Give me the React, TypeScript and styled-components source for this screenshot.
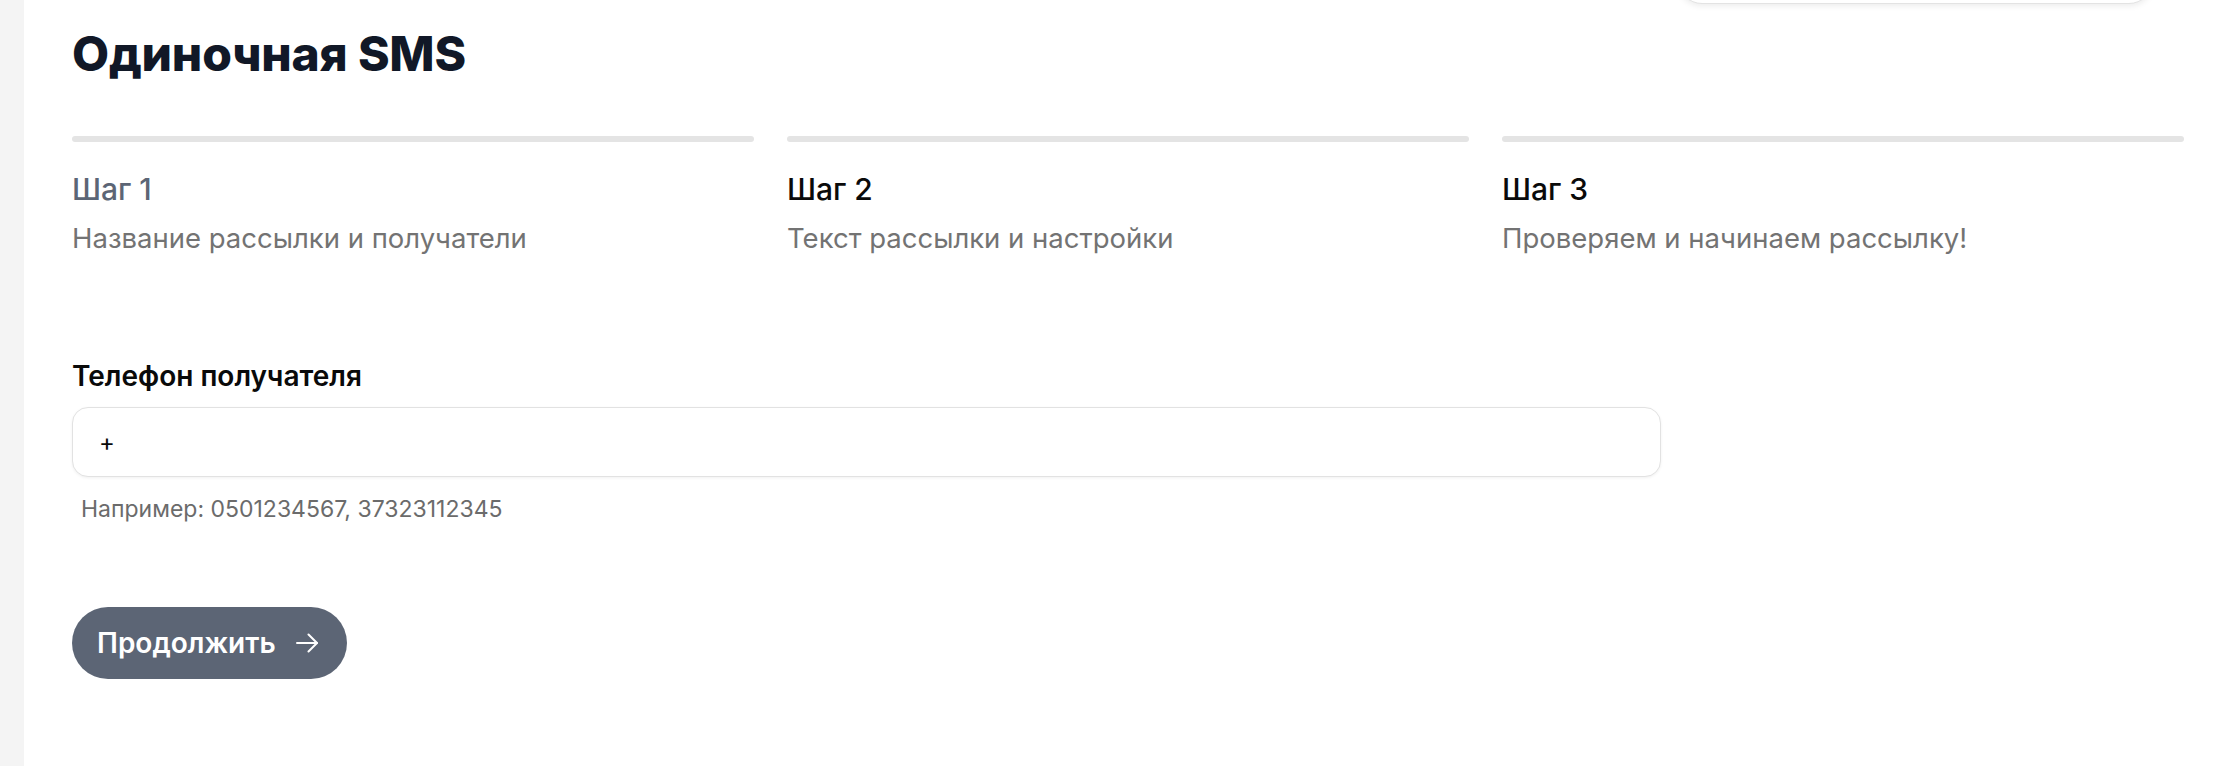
import React from "react";
import styled, { createGlobalStyle } from "styled-components";

const Global = createGlobalStyle`
  html, body { margin: 0; padding: 0; background: #ffffff; }
  body { font-family: Inter, "Noto Sans", sans-serif; -webkit-font-smoothing: antialiased; }
  * { box-sizing: border-box; }
`;

const Layout = styled.div`
  display: flex;
  min-height: 766px;
  width: 2232px;
  overflow: hidden;
`;

const Sidebar = styled.aside`
  flex: 0 0 24px;
  background: #f4f4f4;
`;

const Main = styled.main`
  position: relative;
  flex: 1;
  padding: 24px 48px 40px 48px;
`;

const FloatingBar = styled.div`
  position: absolute;
  top: -60px;
  left: 1654px;
  width: 475px;
  height: 64px;
  border: 1.5px solid #e3e3e3;
  border-radius: 24px;
  background: #fff;
  box-shadow: 0 2px 6px rgba(0, 0, 0, 0.08);
`;

const Title = styled.h1`
  margin: 0;
  font-family: Inter, sans-serif;
  font-weight: 800;
  font-size: 48px;
  line-height: 60px;
  color: #111827;
  letter-spacing: -0.2px;
`;

const Steps = styled.div`
  display: grid;
  grid-template-columns: repeat(3, 1fr);
  column-gap: 33px;
  margin-top: 52px;
`;

const Step = styled.div`
  display: flex;
  flex-direction: column;
`;

const StepBar = styled.div`
  height: 6px;
  border-radius: 3px;
  background: #e4e4e4;
  margin-bottom: 29px;
`;

const StepTitle = styled.div<{ $active?: boolean }>`
  font-size: 30px;
  line-height: 36px;
  font-weight: 500;
  color: ${(p) => (p.$active ? "#5c6575" : "#0a0a0a")};
`;

const StepDesc = styled.div`
  margin-top: 13px;
  font-size: 27.5px;
  line-height: 36px;
  font-weight: 400;
  color: #737373;
`;

const Field = styled.div`
  display: flex;
  flex-direction: column;
  margin-top: 103px;
  width: 1589px;
`;

const Label = styled.label`
  font-size: 28px;
  line-height: 34px;
  font-weight: 600;
  color: #0a0a0a;
  margin-bottom: 14px;
`;

const Input = styled.input`
  height: 70px;
  width: 100%;
  border: 1.5px solid #e2e2e2;
  border-radius: 16px;
  padding: 0 26px;
  font-family: Inter, sans-serif;
  font-size: 24px;
  color: #0a0a0a;
  background: #fff;
  box-shadow: 0 1px 3px rgba(0, 0, 0, 0.06);
  outline: none;
`;

const Hint = styled.div`
  margin-top: 16px;
  padding-left: 9px;
  font-size: 23px;
  line-height: 32px;
  color: #6b6b6b;
`;

const Button = styled.button`
  margin-top: 82px;
  display: inline-flex;
  align-items: center;
  gap: 20px;
  height: 72px;
  padding: 0 29px 0 25px;
  border: none;
  border-radius: 36px;
  background: #5c6575;
  color: #ffffff;
  font-family: Inter, sans-serif;
  font-size: 28px;
  font-weight: 600;
  cursor: pointer;
`;

const ArrowIcon = () => (
  <svg width="22" height="22" viewBox="0 0 22 22" fill="none" stroke="currentColor" strokeWidth="2" strokeLinecap="round" strokeLinejoin="round">
    <path d="M1 11H21" />
    <path d="M12.5 2.5L21 11L12.5 19.5" />
  </svg>
);

const steps = [
  { title: "Шаг 1", desc: "Название рассылки и получатели", active: true },
  { title: "Шаг 2", desc: "Текст рассылки и настройки", active: false },
  { title: "Шаг 3", desc: "Проверяем и начинаем рассылку!", active: false },
];

export default function App() {
  return (
    <>
      <Global />
      <Layout>
        <Sidebar />
        <Main>
          <FloatingBar />
          <Title>Одиночная SMS</Title>
          <Steps>
            {steps.map((s) => (
              <Step key={s.title}>
                <StepBar />
                <StepTitle $active={s.active}>{s.title}</StepTitle>
                <StepDesc>{s.desc}</StepDesc>
              </Step>
            ))}
          </Steps>
          <Field>
            <Label htmlFor="phone">Телефон получателя</Label>
            <Input id="phone" defaultValue="+" />
            <Hint>Например: 0501234567, 37323112345</Hint>
          </Field>
          <Button>
            Продолжить
            <ArrowIcon />
          </Button>
        </Main>
      </Layout>
    </>
  );
}
